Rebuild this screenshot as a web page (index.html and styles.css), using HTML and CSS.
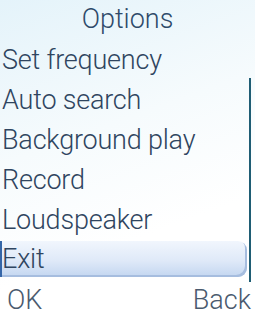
FILE: index.html
```html
<!DOCTYPE html>
<html lang="en">
<head>
    <meta charset="UTF-8">
    <title>Options</title>
    <link rel="stylesheet" href="styles.css">
</head>
<body>
    <div class="screen">
        <div class="title">Options</div>
        <div class="menu">
            <ul class="items">
                <li>Set frequency</li>
                <li>Auto search</li>
                <li>Background play</li>
                <li>Record</li>
                <li>Loudspeaker</li>
                <li class="selected">Exit</li>
            </ul>
            <div class="scrollbar"></div>
        </div>
        <div class="softkeys">
            <span>OK</span>
            <span>Back</span>
        </div>
    </div>
</body>
</html>
```

FILE: styles.css
```css
body {
    margin: 0;
    font-family: Roboto, "Liberation Sans", sans-serif;
    font-weight: 300;
    color: #2f4560;
}
.screen {
    width: 255px;
    height: 320px;
    background: linear-gradient(160deg, #e4f3fa 0%, #f6fbfd 40%, #ffffff 70%);
    display: flex;
    flex-direction: column;
    overflow: hidden;
}
.title {
    height: 40px;
    line-height: 38px;
    text-align: center;
    font-size: 27px;
    color: #2e4a6a;
}
.menu {
    display: flex;
    height: 240px;
}
.items {
    list-style: none;
    margin: 0;
    padding: 0;
    width: 247px;
}
.items li {
    height: 40px;
    line-height: 40px;
    padding-left: 2px;
    font-size: 27px;
    letter-spacing: -0.2px;
    white-space: nowrap;
}
.items li.selected {
    height: 36px;
    line-height: 36px;
    margin-top: 1px;
    border-left: 2px solid #3566a8;
    padding-left: 0;
    border-radius: 0 9px 9px 0;
    background: linear-gradient(#f1f6fd 0%, #dfe9f8 55%, #c3d6f0 100%);
    box-shadow: inset -2px -2px 0 #a6bddf;
}
.scrollbar {
    width: 2px;
    margin: 38px 0 -2px 2px;
    background: #1f5d74;
}
.softkeys {
    display: flex;
    justify-content: space-between;
    height: 40px;
    line-height: 40px;
    padding: 0 4px 0 7px;
    font-size: 27px;
    color: #4a5a6e;
}
```
